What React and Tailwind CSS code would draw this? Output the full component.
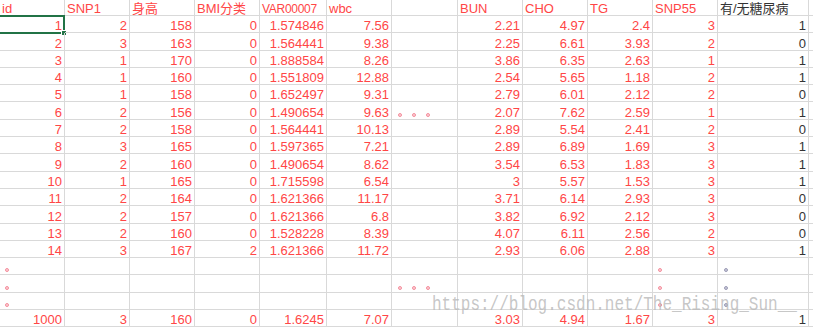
import React from 'react';

const headers = ['id', 'SNP1', '身高', 'BMI分类', 'VAR00007', 'wbc', '', 'BUN', 'CHO', 'TG', 'SNP55', '有/无糖尿病'];

const rows = [
  ['1', '2', '158', '0', '1.574846', '7.56', '', '2.21', '4.97', '2.4', '3', '1'],
  ['2', '3', '163', '0', '1.564441', '9.38', '', '2.25', '6.61', '3.93', '2', '0'],
  ['3', '1', '170', '0', '1.888584', '8.26', '', '3.86', '6.35', '2.63', '1', '1'],
  ['4', '1', '160', '0', '1.551809', '12.88', '', '2.54', '5.65', '1.18', '2', '1'],
  ['5', '1', '158', '0', '1.652497', '9.31', '', '2.79', '6.01', '2.12', '2', '0'],
  ['6', '2', '156', '0', '1.490654', '9.63', 'dots', '2.07', '7.62', '2.59', '1', '1'],
  ['7', '2', '158', '0', '1.564441', '10.13', '', '2.89', '5.54', '2.41', '2', '0'],
  ['8', '3', '165', '0', '1.597365', '7.21', '', '2.89', '6.89', '1.69', '3', '1'],
  ['9', '2', '160', '0', '1.490654', '8.62', '', '3.54', '6.53', '1.83', '3', '1'],
  ['10', '1', '165', '0', '1.715598', '6.54', '', '3', '5.57', '1.53', '3', '1'],
  ['11', '2', '164', '0', '1.621366', '11.17', '', '3.71', '6.14', '2.93', '3', '0'],
  ['12', '2', '157', '0', '1.621366', '6.8', '', '3.82', '6.92', '2.12', '3', '0'],
  ['13', '2', '160', '0', '1.528228', '8.39', '', '4.07', '6.11', '2.56', '2', '0'],
  ['14', '3', '167', '2', '1.621366', '11.72', '', '2.93', '6.06', '2.88', '3', '1'],
  ['dot', '', '', '', '', '', '', '', '', '', 'dot', 'gdot'],
  ['dot', '', '', '', '', '', 'dots', '', '', '', 'dot', 'gdot'],
  ['dot', '', '', '', '', '', '', '', '', '', 'dot', 'gdot'],
  ['1000', '3', '160', '0', '1.6245', '7.07', '', '3.03', '4.94', '1.67', '3', '1'],
];

function Dot({ gray }) {
  return (
    <span
      className={
        gray
          ? 'w-[4px] h-[4px] rounded-full border border-[#9c9cb6] bg-[#c8c8d8]'
          : 'w-[4px] h-[4px] rounded-full border border-[#f58e9c] bg-[#fbd0d6]'
      }
    />
  );
}

function Cell({ value, col, header, first }) {
  const dark = col === 11;
  const color = dark ? 'text-[#333333]' : 'text-[#ff4646]';
  let content = value;
  if (value === 'dot') content = <span className="mb-[2px] ml-[3px] flex"><Dot /></span>;
  if (value === 'gdot') content = <span className="mb-[2px] ml-[4px] flex"><Dot gray /></span>;
  if (value === 'dots')
    content = (
      <span className="mb-[2px] ml-[4px] flex gap-[10px]">
        <Dot /><Dot /><Dot />
      </span>
    );
  const special = value === 'dot' || value === 'gdot' || value === 'dots';
  return (
    <div
      className={`relative flex items-end border-r border-b border-[#d9d9d9] px-[2px] leading-none whitespace-nowrap overflow-visible ${color} ${
        header || special ? 'justify-start px-0' : 'justify-end'
      } ${header ? 'px-[2px]' : ''}`}
    >
      {content}
      {first && (
        <div className="absolute left-[-2px] top-[-1px] w-[67px] h-[19px] border-2 border-[#217346]">
          <div className="absolute right-[-4px] bottom-[-4px] w-[6px] h-[6px] bg-[#217346] border border-white" />
        </div>
      )}
    </div>
  );
}

export default function App() {
  return (
    <div
      className="relative w-[813px] h-[328px] overflow-hidden bg-white text-[13px]"
      style={{ fontFamily: '"Liberation Sans", "Noto Sans CJK SC", sans-serif' }}
    >
      <div className="grid grid-cols-[65px_65px_65px_65px_67px_65px_66px_65px_65px_65px_65px_91px_4px] grid-rows-[16px_repeat(18,17.3px)]">
        {headers.map((h, i) => (
          <div
            key={'h' + i}
            className={`flex items-end border-r border-b border-[#d9d9d9] px-[2px] leading-none whitespace-nowrap overflow-hidden ${
              i === 11 ? 'text-[#333333]' : 'text-[#ff4646]'
            } ${i === 4 ? 'text-[12px] tracking-tight' : ''}`}
          >
            {h}
          </div>
        ))}
        <div className="border-b border-[#d9d9d9]" />
        {rows.map((r, ri) => (
          <React.Fragment key={ri}>
            {r.map((v, ci) => (
              <Cell key={ci} value={v} col={ci} first={ri === 0 && ci === 0} />
            ))}
            <div className="border-b border-[#d9d9d9]" />
          </React.Fragment>
        ))}
      </div>

      <div
        className="absolute left-[432px] top-[299px] text-[16px] leading-none text-[#b8b8b8]/80 scale-y-[1.25] origin-bottom whitespace-nowrap"
        style={{ fontFamily: '"Liberation Mono", monospace' }}
      >
        https://blog.csdn.net/The_Rising_Sun__
      </div>
    </div>
  );
}
